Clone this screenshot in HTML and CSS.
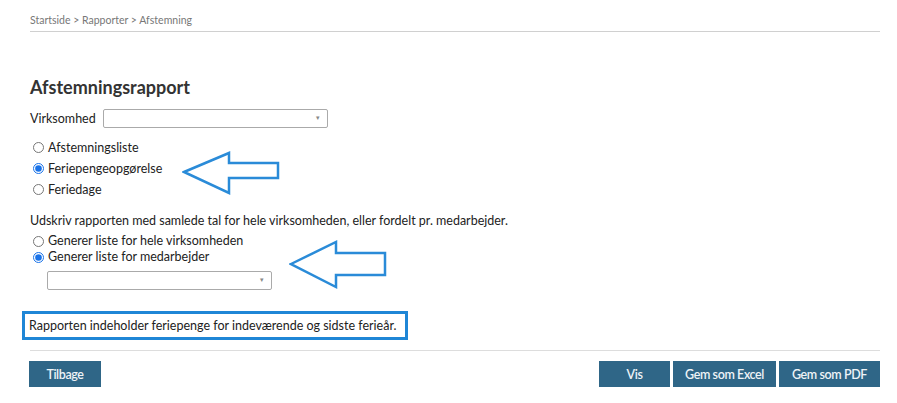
FILE: index.html
```html
<!DOCTYPE html>
<html lang="da">
<head>
<meta charset="utf-8">
<title>Afstemningsrapport</title>
<link rel="stylesheet" href="styles.css">
</head>
<body>
<div class="page">
  <div class="breadcrumb">Startside &gt; Rapporter &gt; Afstemning</div>
  <h1 class="title">Afstemningsrapport</h1>
  <div class="field">
    <label class="field-label">Virksomhed</label>
    <div class="select select-wide"><span class="caret">▾</span></div>
  </div>
  <div class="radio-group types">
    <label class="radio"><input type="radio" name="t"> Afstemningsliste</label>
    <label class="radio"><input type="radio" name="t" checked> Feriepengeopgørelse</label>
    <label class="radio"><input type="radio" name="t"> Feriedage</label>
  </div>
  <p class="desc">Udskriv rapporten med samlede tal for hele virksomheden, eller fordelt pr. medarbejder.</p>
  <div class="radio-group scope">
    <label class="radio"><input type="radio" name="s"> Generer liste for hele virksomheden</label>
    <label class="radio"><input type="radio" name="s" checked> Generer liste for medarbejder</label>
  </div>
  <div class="select select-emp"><span class="caret">▾</span></div>
  <div class="note">Rapporten indeholder feriepenge for indeværende og sidste ferieår.</div>
  <div class="actions">
    <button class="btn btn-back">Tilbage</button>
    <div class="btn-group">
      <button class="btn btn-vis">Vis</button>
      <button class="btn btn-excel">Gem som Excel</button>
      <button class="btn btn-pdf">Gem som PDF</button>
    </div>
  </div>
  <svg class="arrow arrow-1" width="100" height="46" viewBox="0 0 100 46"><path d="M2 21 L47 2 L47 12 L96 12 L96 27 L47 27 L47 42 Z" fill="none" stroke="#2a8bd8" stroke-width="2.5" stroke-linejoin="miter"/></svg>
  <svg class="arrow arrow-2" width="100" height="50" viewBox="0 0 100 50"><path d="M2 24 L47 2 L47 13 L96 13 L96 35 L47 35 L47 47 Z" fill="none" stroke="#2a8bd8" stroke-width="2.5" stroke-linejoin="miter"/></svg>
</div>
</body>
</html>
```
FILE: styles.css
```css
* { box-sizing: border-box; }
html, body { margin: 0; padding: 0; background: #fff; }
body {
  font-family: Lato, "Open Sans", "Liberation Sans", sans-serif;
  font-size: 12.5px;
  color: #222;
}
.page {
  position: relative;
  padding: 13px 17px 0 30px;
  width: 897px;
  height: 403px;
  white-space: nowrap;
}
.breadcrumb {
  font-size: 10.5px;
  color: #777;
  line-height: 14px;
  padding-bottom: 4px;
  border-bottom: 1px solid #d0d0d0;
}
.title {
  margin: 43px 0 0;
  font-size: 18px;
  font-weight: 700;
  color: #333;
  line-height: 24px;
}
.field {
  display: flex;
  align-items: center;
  margin-top: 10px;
  gap: 7px;
}
.field-label { line-height: 18px; }
.select {
  position: relative;
  height: 19px;
  border: 1px solid #aaa;
  border-radius: 2px;
  background: #fff;
}
.select-wide { width: 225px; }
.select-emp { width: 225px; height: 19px; margin: 6px 0 0 17px; }
.caret {
  position: absolute;
  right: 7px;
  top: 3px;
  font-size: 7px;
  color: #888;
}
.radio-group { display: flex; flex-direction: column; }
.types { margin-top: 11px; gap: 4px; }
.radio {
  display: flex;
  align-items: center;
  line-height: 17px;
}
.radio input {
  width: 11px;
  height: 11px;
  margin: 0 4px 0 3px;
  accent-color: #1a73e8;
}
.desc { margin: 14px 0 0; line-height: 17px; }
.scope { margin-top: 4px; gap: 0; }
.scope .radio { line-height: 16px; }
.note {
  margin: 21px 0 0 -8px;
  width: 386px;
  border: 3px solid #1f86d6;
  padding: 3px 4px;
  line-height: 17px;
}
.actions {
  margin-top: 10px;
  border-top: 1px solid #ddd;
  padding-top: 10px;
  display: flex;
  justify-content: space-between;
}
.btn-group { display: flex; gap: 3px; }
.btn {
  font-family: inherit;
  font-size: 12.5px;
  font-weight: 600;
  color: #eef3f7;
  background: #2f6687;
  border: none;
  height: 26px;
  padding: 0;
  letter-spacing: -0.4px;
  white-space: nowrap;
}
.btn-back { width: 72px; margin-left: -1px; }
.btn-vis { width: 71px; }
.btn-excel { width: 103px; }
.btn-pdf { width: 101px; }
.arrow { position: absolute; }
.arrow-1 { left: 182px; top: 151px; }
.arrow-2 { left: 289px; top: 240px; }
```
